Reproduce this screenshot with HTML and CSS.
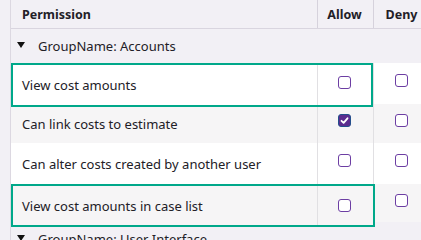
FILE: index.html
```html
<!DOCTYPE html>
<html lang="en">
<head>
    <meta charset="UTF-8">
    <title>Permissions</title>
    <link rel="stylesheet" href="styles.css">
</head>
<body>

    <div class="grid">
        <!-- Header -->
        <div class="row head">
            <div class="main">
                <div class="cell perm">Permission</div>
                <div class="cell chk">Allow</div>
            </div>
            <div class="cell chk deny">Deny</div>
        </div>

        <div class="group"><span class="caret"></span>GroupName: Accounts</div>

        <div class="row white hl r1">
            <div class="main">
                <div class="cell perm">View cost amounts</div>
                <div class="cell chk"><span class="box"></span></div>
            </div>
            <div class="cell chk deny"><span class="box"></span></div>
        </div>

        <div class="row gray r2">
            <div class="main">
                <div class="cell perm">Can link costs to estimate</div>
                <div class="cell chk">
                    <span class="box checked">
                        <svg width="9" height="9" viewBox="0 0 9 9"><polyline points="1.5,4.8 3.6,6.8 7.5,2.3" fill="none" stroke="#fff" stroke-width="1.8" stroke-linecap="round" stroke-linejoin="round"/></svg>
                    </span>
                </div>
            </div>
            <div class="cell chk deny"><span class="box"></span></div>
        </div>

        <div class="row white r3">
            <div class="main">
                <div class="cell perm">Can alter costs created by another user</div>
                <div class="cell chk"><span class="box"></span></div>
            </div>
            <div class="cell chk deny"><span class="box"></span></div>
        </div>

        <div class="row gray hl r4">
            <div class="main">
                <div class="cell perm">View cost amounts in case list</div>
                <div class="cell chk"><span class="box"></span></div>
            </div>
            <div class="cell chk deny"><span class="box"></span></div>
        </div>

        <div class="group"><span class="caret"></span>GroupName: User Interface</div>
    </div>

</body>
</html>
```

FILE: styles.css
```css
/* General */
body {
    margin: 0;
    background: #f2f0f5;
    font-family: "Segoe UI", "Noto Sans", sans-serif;
    font-size: 13px;
    color: #222027;
    overflow: hidden;
}

.grid {
    margin-left: 10px;
    border-left: 1px solid #dcd8e1;
    width: 430px;
}

/* Rows */
.row {
    display: flex;
    align-items: flex-start;
}

.main {
    display: flex;
    flex: 0 0 auto;
    width: 362px;
    box-sizing: border-box;
    border: 2px solid transparent;
    border-top: 0;
    border-bottom: 0;
}

.cell {
    display: flex;
    align-items: center;
    box-sizing: border-box;
}

.perm {
    width: 304px;
    padding-left: 9px;
}

.chk {
    width: 54px;
    justify-content: center;
    border-left: 1px solid #e1e0e3;
}

.deny {
    width: 56px;
}

/* Header */
.head {
    height: 28px;
    border-bottom: 1px solid #d9d5df;
    font-weight: bold;
    font-size: 12.5px;
}
.head .cell {
    height: 28px;
}
.head .chk {
    border-left-color: #d6d2dc;
}

/* Group */
.group {
    height: 34px;
    display: flex;
    align-items: center;
    padding-left: 6px;
}
.caret {
    width: 0;
    height: 0;
    border-left: 4px solid transparent;
    border-right: 4px solid transparent;
    border-top: 6px solid #111;
    margin-right: 13px;
    margin-bottom: 2px;
}

/* Row colors */
.white .main, .white .deny { background: #ffffff; }
.gray .main, .gray .deny { background: #f6f5f6; }

/* Highlighted rows */
.hl .main {
    position: relative;
    z-index: 1;
    border: 2px solid #00a88a;
    margin-bottom: -3px;
}

.r1 .main { height: 44px; }
.r1 .main .cell { height: 40px; }
.r1 .deny { height: 41px; }

.r2 .main, .r2 .main .cell, .r2 .deny { height: 39px; }

.r3 .main, .r3 .main .cell, .r3 .deny { height: 41px; }

.r4 .main {
    width: 364px;
    height: 43px;
    margin-right: -2px;
    margin-bottom: -5px;
}
.r4 .main .chk { width: 56px; padding-right: 2px; }
.r4 .main .cell { height: 39px; }
.r4 .main .box { margin-bottom: 0; }
.r4 .deny { height: 38px; }

/* Checkboxes */
.box {
    width: 13px;
    height: 13px;
    box-sizing: border-box;
    border: 1.5px solid #6c3ea3;
    border-radius: 3px;
    background: #fff;
    margin-bottom: 6px;
    display: flex;
    align-items: center;
    justify-content: center;
}
.box.checked {
    background: #5b2c8f;
    border-color: #244f8c;
}
```
